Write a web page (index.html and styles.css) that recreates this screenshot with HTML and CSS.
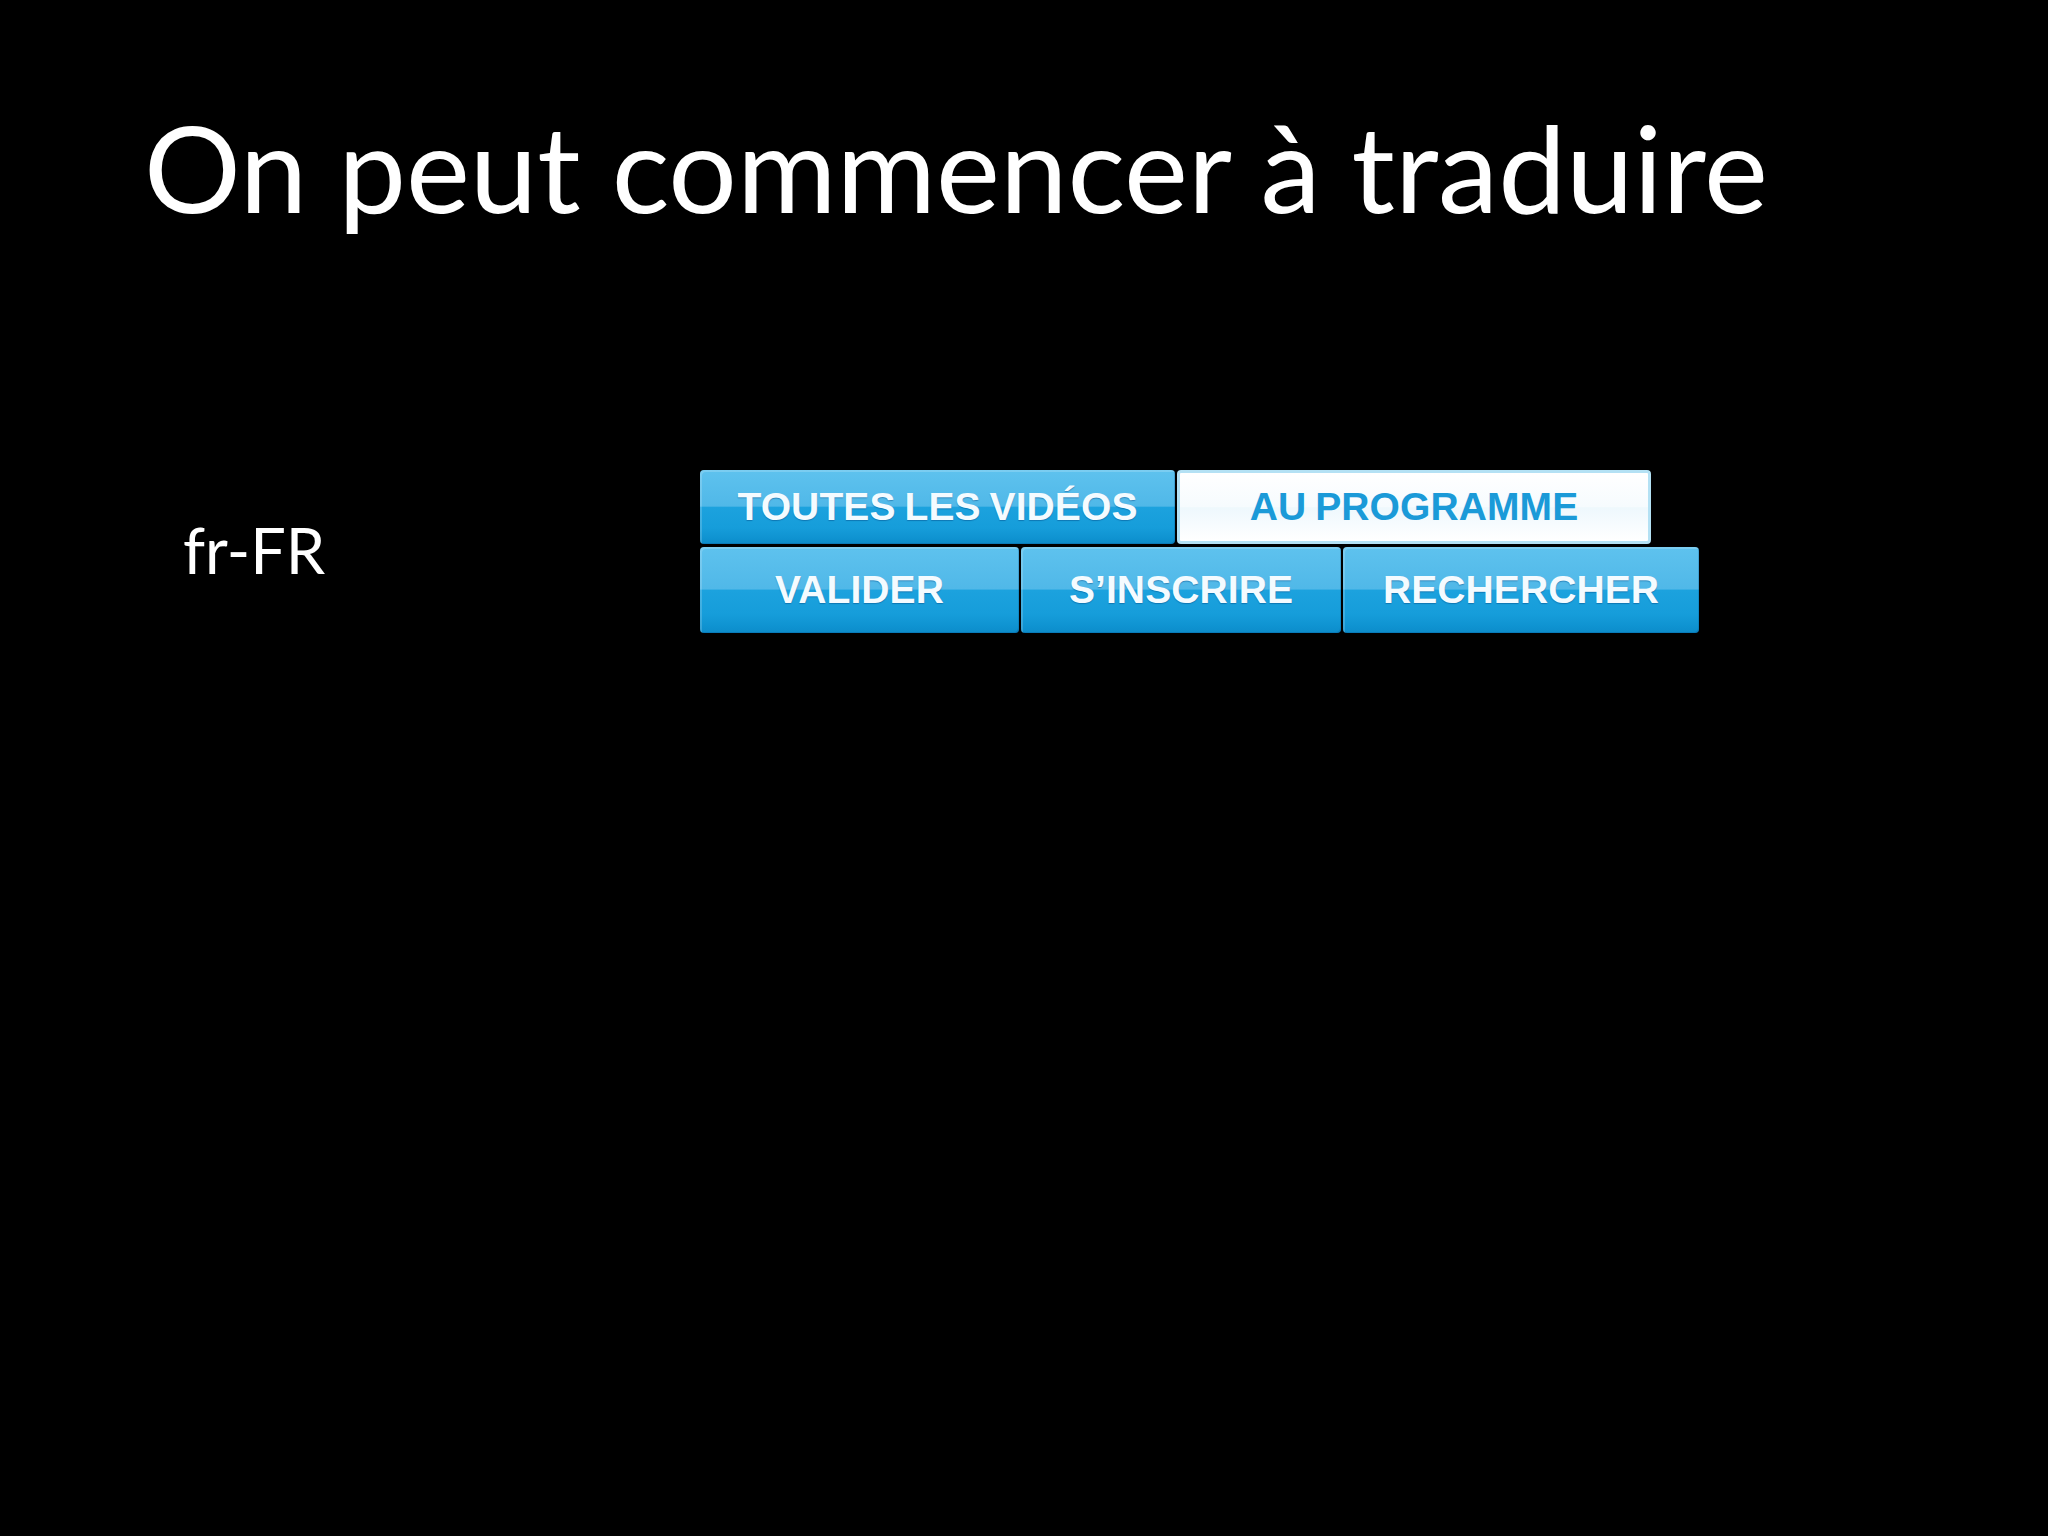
FILE: index.html
```html
<!DOCTYPE html>
<html lang="fr">
<head>
<meta charset="utf-8">
<title>On peut commencer à traduire</title>
<link rel="stylesheet" href="styles.css">
</head>
<body>
<div class="slide">
  <h1 class="title">On peut commencer à traduire</h1>
  <div class="example">
    <div class="locale">fr-FR</div>
    <div class="buttons">
      <div class="row row-top">
        <div class="btn w-toutes">TOUTES LES VIDÉOS</div>
        <div class="btn btn-active w-prog">AU PROGRAMME</div>
      </div>
      <div class="row row-bottom">
        <div class="btn w-valider">VALIDER</div>
        <div class="btn w-inscrire">S’INSCRIRE</div>
        <div class="btn w-rech">RECHERCHER</div>
      </div>
    </div>
  </div>
</div>
</body>
</html>
```
FILE: styles.css
```css
html, body {
  margin: 0;
  padding: 0;
  background: #000;
}
.slide {
  width: 2048px;
  height: 1536px;
  background: #000;
  color: #fff;
  font-family: Lato, "Open Sans", sans-serif;
  overflow: hidden;
}
.title {
  margin: 0;
  padding: 106px 0 0 144px;
  font-size: 121px;
  line-height: 1;
  font-weight: 400;
  letter-spacing: 0;
  color: #fff;
}
.example {
  display: flex;
  align-items: flex-start;
  margin-top: 243px;
  padding-left: 183px;
}
.locale {
  width: 517px;
  margin-top: 48px;
  font-size: 63px;
  line-height: 1;
  color: #fff;
}
.buttons {
  display: flex;
  flex-direction: column;
  gap: 3px;
}
.row {
  display: flex;
  gap: 2px;
}
.row-top .btn { height: 74px; }
.row-bottom .btn { height: 86px; }
.btn {
  display: flex;
  align-items: center;
  justify-content: center;
  box-sizing: border-box;
  border-radius: 4px;
  background: linear-gradient(to bottom,
    #5ec2ee 0%, #50b8e8 49%, #1ca2de 50%, #169dda 78%, #0f93d1 92%, #0c8cca 100%);
  box-shadow: inset 2px 2px 0 rgba(255,255,255,0.18), inset -1px -1px 0 rgba(0,70,130,0.25);
  font-family: "Liberation Sans", Arial, sans-serif;
  font-weight: 700;
  font-size: 39px;
  letter-spacing: 0.1px;
  word-spacing: -2px;
  white-space: pre;
  color: #f4fbff;
  text-shadow: 0 1px 1px rgba(0,70,130,0.45);
}
.btn-active {
  background: linear-gradient(to bottom, #ffffff 0%, #f6fbfe 50%, #eef8fd 51%, #ffffff 100%);
  border: 3px solid #b4e1f4;
  color: #1b9ad8;
  text-shadow: none;
  box-shadow: none;
}
.w-toutes { width: 475px; }
.w-prog { width: 474px; }
.w-valider { width: 319px; }
.w-inscrire { width: 320px; }
.w-rech { width: 356px; }
```
